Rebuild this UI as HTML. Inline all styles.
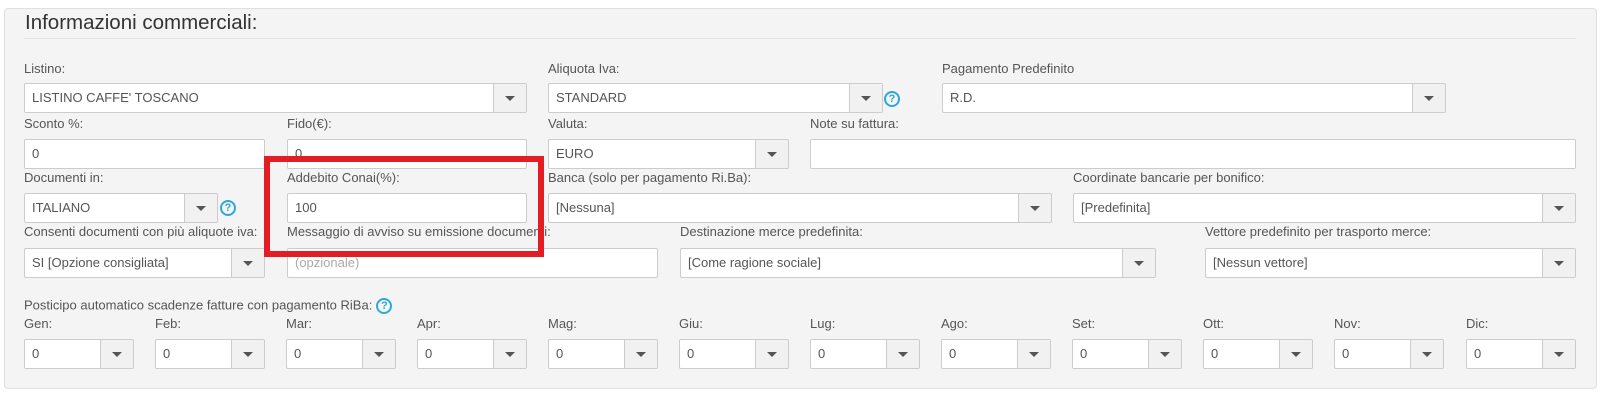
<!DOCTYPE html>
<html><head><meta charset="utf-8"><style>
*{box-sizing:border-box;margin:0;padding:0}
body{width:1603px;height:400px;background:#fff;font-family:"Liberation Sans",Arial,sans-serif;position:relative;overflow:hidden}
.panel{position:absolute;left:4px;top:8px;width:1593px;height:381px;background:#f4f4f4;border:1px solid #e0e0e0;border-radius:4px}
.title{position:absolute;left:25px;top:11px;font-size:20.5px;color:#333}
.hr{position:absolute;left:24px;top:38px;width:1552px;height:1px;background:#e2e2e2}
.l{position:absolute;font-size:13px;color:#555;line-height:14px;white-space:nowrap}
.b{position:absolute;height:30px;background:#fff;border:1px solid #ccc;border-radius:2px;font-size:13px;color:#555;line-height:28px;padding-left:7px;white-space:nowrap;overflow:hidden}
.b.s::after{content:"";position:absolute;right:0;top:0;width:32px;height:28px;background:#f1f1f1;border-left:1px solid #ccc}
.b.s::before{content:"";position:absolute;right:11px;top:12px;border-left:5px solid transparent;border-right:5px solid transparent;border-top:5px solid #555;z-index:2}
.ph{color:#aaa}
.h{position:absolute;width:16px;height:16px;border:2px solid #2ea8d8;border-radius:50%;color:#2ea8d8;font-size:11px;font-weight:bold;text-align:center;line-height:12px}
.hi{display:inline-block;vertical-align:middle;margin-left:4px;width:16px;height:16px;border:2px solid #2ea8d8;border-radius:50%;color:#2ea8d8;font-size:11px;font-weight:bold;text-align:center;line-height:12px}
.red{position:absolute;left:264px;top:156px;width:280px;height:101px;border:6px solid #e41d25}
</style></head><body>
<div class="panel"></div>
<div class="title">Informazioni commerciali:</div>
<div class="hr"></div>

<div class="l" style="left:24px;top:62px">Listino:</div>
<div class="b s" style="left:24px;top:83px;width:503px">LISTINO CAFFE' TOSCANO</div>
<div class="l" style="left:548px;top:62px">Aliquota Iva:</div>
<div class="b s" style="left:548px;top:83px;width:335px">STANDARD</div>
<div class="h" style="left:884px;top:91px">?</div>
<div class="l" style="left:942px;top:62px">Pagamento Predefinito</div>
<div class="b s" style="left:942px;top:83px;width:504px">R.D.</div>

<div class="l" style="left:24px;top:117px">Sconto %:</div>
<div class="b" style="left:24px;top:139px;width:241px">0</div>
<div class="l" style="left:287px;top:117px">Fido(€):</div>
<div class="b" style="left:287px;top:139px;width:240px">0</div>
<div class="l" style="left:548px;top:117px">Valuta:</div>
<div class="b s" style="left:548px;top:139px;width:241px">EURO</div>
<div class="l" style="left:810px;top:117px">Note su fattura:</div>
<div class="b" style="left:810px;top:139px;width:766px"></div>

<div class="l" style="left:24px;top:171px">Documenti in:</div>
<div class="b s" style="left:24px;top:193px;width:194px">ITALIANO</div>
<div class="h" style="left:220px;top:200px">?</div>
<div class="l" style="left:287px;top:171px">Addebito Conai(%):</div>
<div class="b" style="left:287px;top:193px;width:240px">100</div>
<div class="l" style="left:548px;top:171px">Banca (solo per pagamento Ri.Ba):</div>
<div class="b s" style="left:548px;top:193px;width:504px">[Nessuna]</div>
<div class="l" style="left:1073px;top:171px">Coordinate bancarie per bonifico:</div>
<div class="b s" style="left:1073px;top:193px;width:503px">[Predefinita]</div>

<div class="l" style="left:24px;top:225px">Consenti documenti con più aliquote iva:</div>
<div class="b s" style="left:24px;top:248px;width:241px">SI [Opzione consigliata]</div>
<div class="l" style="left:287px;top:225px">Messaggio di avviso su emissione documenti:</div>
<div class="b" style="left:287px;top:248px;width:371px"><span class="ph">(opzionale)</span></div>
<div class="l" style="left:680px;top:225px">Destinazione merce predefinita:</div>
<div class="b s" style="left:680px;top:248px;width:476px">[Come ragione sociale]</div>
<div class="l" style="left:1205px;top:225px">Vettore predefinito per trasporto merce:</div>
<div class="b s" style="left:1205px;top:248px;width:371px">[Nessun vettore]</div>

<div class="l" style="left:24px;top:298px">Posticipo automatico scadenze fatture con pagamento RiBa:<span class="hi">?</span></div>

<div class="l" style="left:24px;top:317px">Gen:</div><div class="b s" style="left:24px;top:339px;width:110px">0</div>
<div class="l" style="left:155px;top:317px">Feb:</div><div class="b s" style="left:155px;top:339px;width:110px">0</div>
<div class="l" style="left:286px;top:317px">Mar:</div><div class="b s" style="left:286px;top:339px;width:110px">0</div>
<div class="l" style="left:417px;top:317px">Apr:</div><div class="b s" style="left:417px;top:339px;width:110px">0</div>
<div class="l" style="left:548px;top:317px">Mag:</div><div class="b s" style="left:548px;top:339px;width:110px">0</div>
<div class="l" style="left:679px;top:317px">Giu:</div><div class="b s" style="left:679px;top:339px;width:110px">0</div>
<div class="l" style="left:810px;top:317px">Lug:</div><div class="b s" style="left:810px;top:339px;width:110px">0</div>
<div class="l" style="left:941px;top:317px">Ago:</div><div class="b s" style="left:941px;top:339px;width:110px">0</div>
<div class="l" style="left:1072px;top:317px">Set:</div><div class="b s" style="left:1072px;top:339px;width:110px">0</div>
<div class="l" style="left:1203px;top:317px">Ott:</div><div class="b s" style="left:1203px;top:339px;width:110px">0</div>
<div class="l" style="left:1334px;top:317px">Nov:</div><div class="b s" style="left:1334px;top:339px;width:110px">0</div>
<div class="l" style="left:1466px;top:317px">Dic:</div><div class="b s" style="left:1466px;top:339px;width:110px">0</div>

<div class="red"></div>
</body></html>
